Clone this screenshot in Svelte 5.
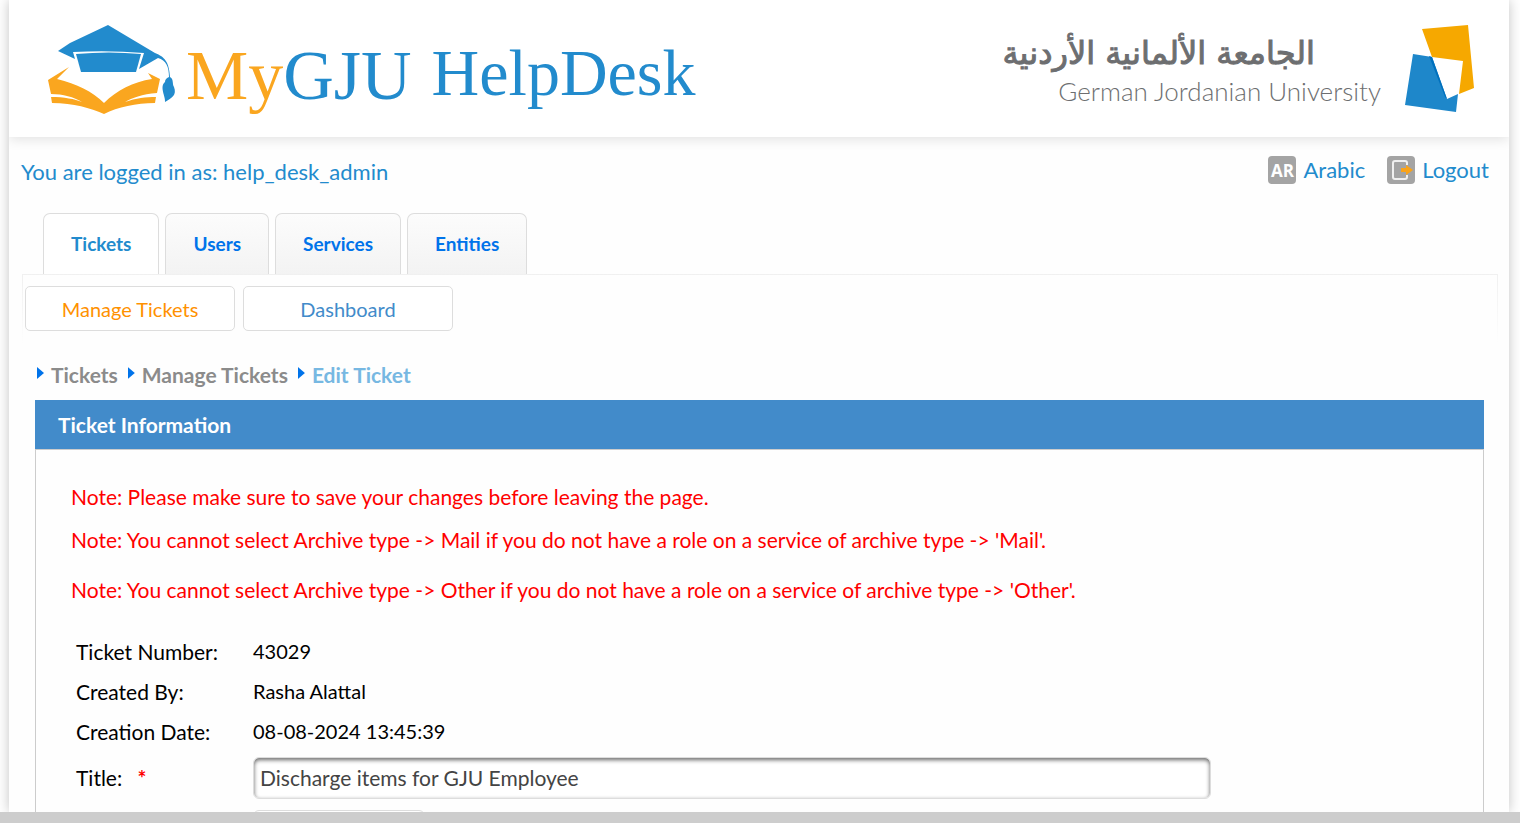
<script>
	let ticketTitle = 'Discharge items for GJU Employee';
	let archiveType = '';

	const tabs = ['Tickets', 'Users', 'Services', 'Entities'];
	const subTabs = ['Manage Tickets', 'Dashboard'];
	const crumbs = ['Tickets', 'Manage Tickets', 'Edit Ticket'];

	const notes = [
		'Note: Please make sure to save your changes before leaving the page.',
		"Note: You cannot select Archive type -> Mail if you do not have a role on a service of archive type -> 'Mail'.",
		"Note: You cannot select Archive type -> Other if you do not have a role on a service of archive type -> 'Other'."
	];

	const details = [
		{ label: 'Ticket Number:', value: '43029' },
		{ label: 'Created By:', value: 'Rasha Alattal' },
		{ label: 'Creation Date:', value: '08-08-2024 13:45:39' }
	];
</script>

<div class="window">
	<div class="page">
		<header>
			<div class="brand">
				<svg class="cap" width="130" height="92" viewBox="0 0 130 92" aria-hidden="true">
					<path
						fill="#228bcd"
						d="M10 27 22 19 60 1 107 29C117 33 121 38 122 53 126 55 124 60 126 63 129 71 124 74 117 78 118 73 111 63 117 58 117 56 118 54 121 53 121 43 118 36 110 34L91 45 96 29Q61 26 25 28L27 35Z"
					/>
					<path fill="#228bcd" d="M28 30Q61 27 93 30L88 48H33Z" />
					<path
						fill="#faa61f"
						d="M0 56 21 43 9 55C29 60 44 67 56 79 69 66 85 58 104 55L100 49 112 55 109 69C94 70 84 74 77 78 88 74 98 73 108 73L107 79C88 79 70 83 56 90 42 84 26 79 4 79L3 73C16 73 27 75 34 78 26 73 15 70 3 70Z"
					/>
				</svg>
				<span class="brand-name"><span class="my">My</span>GJU</span>
				<span class="brand-app">HelpDesk</span>
			</div>

			<div class="university">
				<div class="university-name">
					<span class="arabic" lang="ar" dir="rtl">الجامعة الألمانية الأردنية</span>
					<span class="english">German Jordanian University</span>
				</div>
				<svg width="72" height="88" viewBox="0 0 72 88" aria-hidden="true">
					<path fill="#f6a800" d="M18 4 64 0 70 63 55 69 59 36 28 32Z" />
					<path fill="#1e87ca" d="M9 29 28 32 43 74 54 69 52 87 1 80Z" />
					<path fill="#0070bd" d="M25 31 28 32 43 74 41 72Z" />
				</svg>
			</div>
		</header>

		<div class="user-bar">
			<span>You are logged in as: help_desk_admin</span>
			<nav class="user-links">
				<a href="#arabic">
					<span class="lang-icon">AR</span>
					Arabic
				</a>
				<a href="#logout">
					<svg width="28" height="28" viewBox="0 0 28 28" aria-hidden="true">
						<rect width="28" height="28" rx="4" fill="#a4a4a4" />
						<path d="M20 9V7Q20 5 18 5H8Q6 5 6 7V21Q6 23 8 23H18Q20 23 20 21V19" fill="none" stroke="#f0f0f0" stroke-width="2" />
						<path d="M14 12H19V9L26 14 19 19V16H14Z" fill="#f9a31a" />
					</svg>
					Logout
				</a>
			</nav>
		</div>

		<nav class="tabs">
			{#each tabs as tab, i}
				<a href="#{tab.toLowerCase()}" class="tab" class:active={i === 0}>{tab}</a>
			{/each}
		</nav>

		<div class="sub-panel">
			{#each subTabs as subTab, i}
				<button type="button" class="sub-tab" class:active={i === 0}>{subTab}</button>
			{/each}
		</div>

		<ol class="breadcrumb">
			{#each crumbs as crumb, i}
				<li class:current={i === crumbs.length - 1}>{crumb}</li>
			{/each}
		</ol>

		<section class="panel">
			<h2>Ticket Information</h2>
			<div class="panel-body">
				<div class="notes">
					{#each notes as note}
						<p>{note}</p>
					{/each}
				</div>

				<form>
					{#each details as { label, value }}
						<div class="row">
							<span>{label}</span>
							<span class="value">{value}</span>
						</div>
					{/each}
					<div class="row field">
						<label for="title">Title: <span class="required">*</span></label>
						<input id="title" type="text" bind:value={ticketTitle} />
					</div>
					<div class="row field">
						<span></span>
						<select aria-label="Archive type" bind:value={archiveType}>
							<option value=""></option>
						</select>
					</div>
				</form>
			</div>
		</section>
	</div>
	<footer></footer>
</div>

<style>
	:global(body) {
		margin: 0;
		background: #fff;
		font-family: Lato, 'Open Sans', sans-serif;
	}

	.window {
		display: flex;
		flex-direction: column;
		height: 100vh;
		overflow: hidden;
		font-size: 21px;
	}

	.page {
		flex: 1;
		min-height: 0;
		margin: 0 11px 0 9px;
		background: #fefefe;
		box-shadow: 0 0 12px rgba(0, 0, 0, 0.24);
	}

	footer {
		position: relative;
		flex: none;
		height: 11px;
		background: #cdcdcd;
	}

	header {
		display: flex;
		justify-content: space-between;
		height: 137px;
		background: #fff;
		box-shadow: 0 2px 12px rgba(0, 0, 0, 0.12);
		clip-path: inset(0 0 -16px);
	}

	.brand {
		display: flex;
		align-items: flex-start;
		padding: 24px 0 0 39px;
		color: #228bcd;
		font-family: 'Liberation Serif', serif;
		white-space: nowrap;
	}

	.brand-name {
		margin: 12px 20px 0 8px;
		font-size: 70px;
		line-height: 80px;
	}

	.my {
		color: #faa61f;
	}

	.brand-app {
		margin-top: 11px;
		font-size: 66px;
		line-height: 76px;
	}

	.university {
		display: flex;
		align-items: flex-start;
		gap: 23px;
		padding: 25px 33px 0 0;
		color: #6d6e70;
		white-space: nowrap;
	}

	.university-name {
		display: flex;
		flex-direction: column;
	}

	.arabic {
		margin: 4px 66px 0 0;
		font-family: 'DejaVu Sans', sans-serif;
		font-size: 32px;
		line-height: 48px;
		text-align: right;
		-webkit-text-stroke: 1px #6d6e70;
	}

	.english {
		font-size: 26px;
		font-weight: 300;
		line-height: 28px;
		text-align: right;
	}

	.user-bar {
		display: flex;
		justify-content: space-between;
		padding: 18px 20px 0 12px;
		color: #228bcd;
		font-size: 22px;
		line-height: 34px;
	}

	.user-links {
		display: flex;
		gap: 22px;
		line-height: 30px;
	}

	.user-links a {
		display: flex;
		align-items: center;
		gap: 7px;
		height: 30px;
		color: inherit;
		text-decoration: none;
	}

	.lang-icon {
		width: 28px;
		height: 28px;
		border-radius: 4px;
		background: #a4a4a4;
		color: #fff;
		font: bold 17px/29px 'Open Sans', sans-serif;
		text-align: center;
	}

	.tabs {
		display: flex;
		gap: 6px;
		padding: 24px 0 0 34px;
	}

	.tab {
		padding: 0 27px;
		border: 1px solid #ddd;
		border-bottom: 0;
		border-radius: 7px 7px 0 0;
		background: linear-gradient(#fcfcfc, #f3f3f3);
		color: #0073ea;
		font-size: 19px;
		font-weight: bold;
		line-height: 60px;
		text-decoration: none;
	}

	.tab.active {
		background: #fff;
		color: #228bcd;
	}

	.sub-panel {
		display: flex;
		gap: 8px;
		margin: 0 11px 0 13px;
		padding: 11px 3px 12px;
		border: 1px solid;
		border-width: 1px 1px 0;
		border-image: linear-gradient(#f0f0f0, #fefefe) 1;
		padding-inline: 2px;
	}

	.sub-tab {
		width: 210px;
		height: 45px;
		border: 1px solid #ddd;
		border-radius: 5px;
		background: #fff;
		color: #428bca;
		font: 20px Lato, sans-serif;
	}

	.sub-tab.active {
		color: #ff9100;
	}

	.breadcrumb {
		display: flex;
		gap: 10px;
		margin: 20px 28px 13px;
		padding: 0;
		color: #8b8b8b;
		font-weight: bold;
		line-height: 24px;
		list-style: none;
	}

	.breadcrumb li {
		display: flex;
		gap: 7px;
	}

	.breadcrumb li::before {
		width: 7px;
		height: 12px;
		margin-top: 4px;
		background: #0073ea;
		clip-path: polygon(0 0, 100% 50%, 0 100%);
		content: '';
	}

	.breadcrumb .current {
		color: #77b8e2;
	}

	.panel {
		margin: 0 25px 0 26px;
	}

	.panel h2 {
		margin: 0;
		padding: 0 23px;
		background: #428bca;
		color: #fff;
		font-size: 21px;
		line-height: 49px;
	}

	.panel-body {
		padding: 32px 35px;
		border: 1px solid #ccc;
	}

	.notes {
		color: #f00;
	}

	.notes p {
		margin: 0 0 20px;
		line-height: 30px;
	}

	.notes p:first-child {
		margin-bottom: 13px;
	}

	form {
		padding: 6px 12px 0 5px;
		color: #000;
	}

	.row {
		display: grid;
		grid-template-columns: 177px 1fr;
		align-items: center;
		min-height: 40px;
	}

	.value {
		font-size: 20px;
	}

	.field {
		min-height: 53px;
	}

	.required {
		margin-left: 10px;
		color: #f00;
		font-weight: bold;
	}

	input,
	select {
		box-sizing: border-box;
		height: 42px;
		border: 1px solid #ddd;
		border-radius: 6px;
		background: #fff;
		color: #444;
		font: 21px Lato, sans-serif;
	}

	input {
		width: 81%;
		padding: 0 6px;
		box-shadow: inset 0 2px 4px rgba(0, 0, 0, 0.6);
	}

	select {
		width: 172px;
	}
</style>
